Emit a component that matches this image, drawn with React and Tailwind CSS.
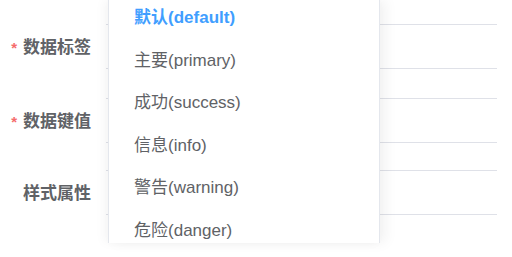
import React from "react";

const options = [
  { label: "默认", value: "default" },
  { label: "主要", value: "primary" },
  { label: "成功", value: "success" },
  { label: "信息", value: "info" },
  { label: "警告", value: "warning" },
  { label: "危险", value: "danger" },
];

const fields = [
  { label: "数据标签", required: true, gap: "mt-[24px]" },
  { label: "数据键值", required: true, gap: "mt-[29px]" },
  { label: "样式属性", required: false, gap: "mt-[27px]" },
];

const App = () => {
  const selected = "default";

  return (
    <div
      className="relative w-[512px] h-[257px] overflow-hidden bg-white text-[17px] text-[#606266]"
      style={{ fontFamily: '"Liberation Sans", Arial, "Noto Sans CJK SC", sans-serif' }}
    >
      <div className="flex flex-col">
        {fields.map((f) => (
          <div key={f.label} className={`flex h-[45px] ${f.gap}`}>
            <div className="w-[106px] pr-[15px] pt-[3px] flex items-center justify-end font-bold">
              {f.required && <span className="text-[#f56c6c] mr-[6px] text-[15px]">*</span>}
              {f.label}
            </div>
            <div className="w-[391px] border-y border-[#dfe1e8]"></div>
          </div>
        ))}
      </div>

      <div className="absolute left-[108px] top-0 w-[272px] h-[243px] overflow-hidden bg-white border-x border-[#e4e7ed] shadow-[6px_0_12px_rgba(0,0,0,0.05),-4px_0_10px_rgba(0,0,0,0.04)]">
        <ul className="-mt-[3px]">
          {options.map((o) => (
            <li
              key={o.value}
              className={`h-[42.6px] leading-[42.6px] px-[25px] whitespace-nowrap ${
                o.value === selected ? "text-[#409eff] font-bold" : ""
              }`}
            >
              {o.label}({o.value})
            </li>
          ))}
        </ul>
      </div>
    </div>
  );
};

export default App;
